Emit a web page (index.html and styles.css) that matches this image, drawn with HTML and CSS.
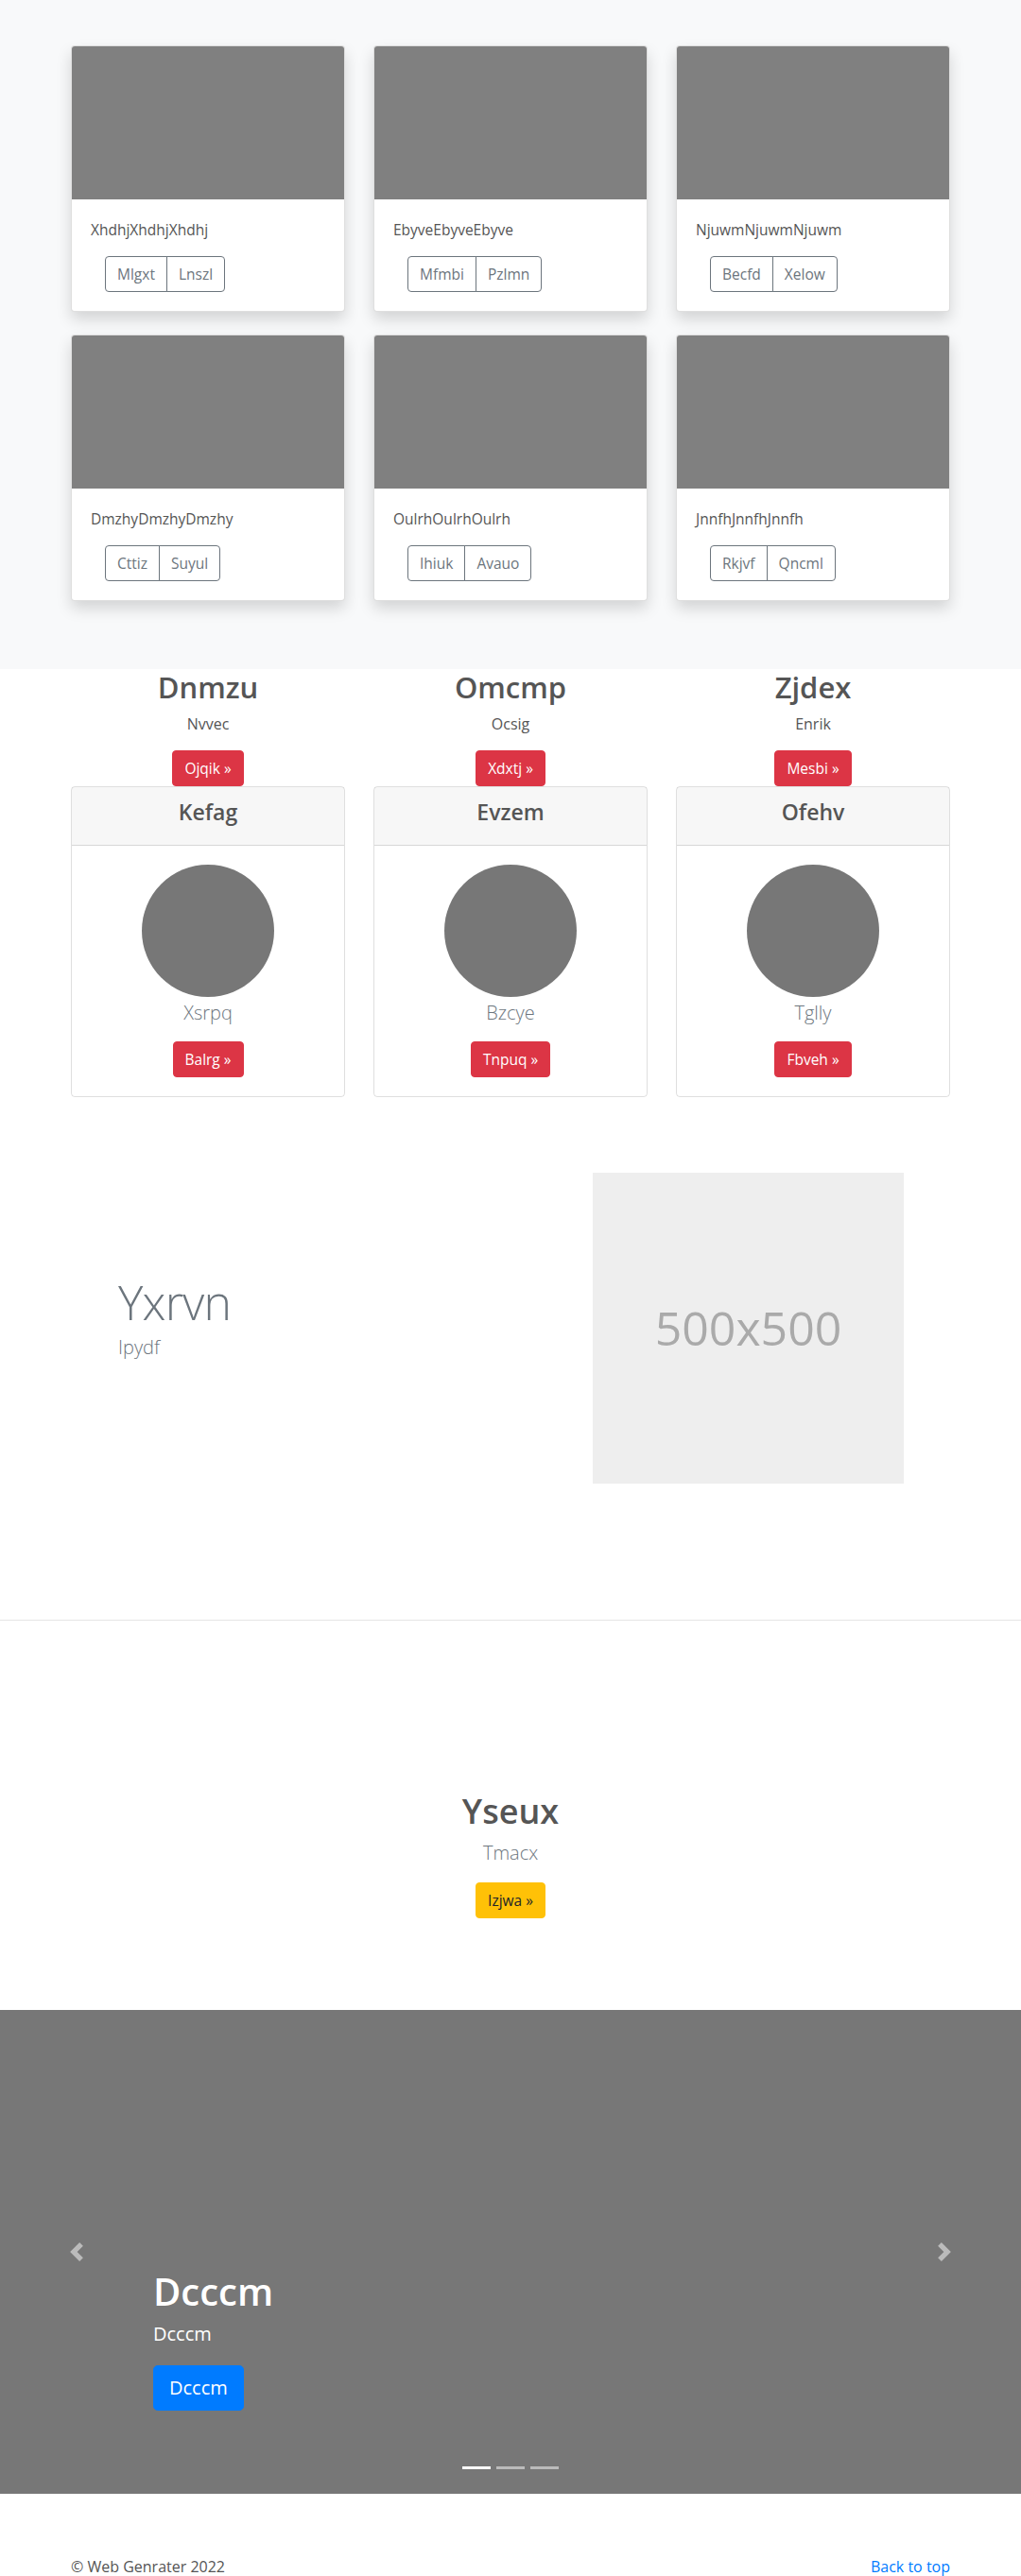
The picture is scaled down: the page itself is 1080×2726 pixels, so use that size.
FILE: index.html
```html
<!DOCTYPE html>
<html lang="en">
<head>
<meta charset="utf-8">
<title>Album</title>
<link rel="stylesheet" href="styles.css">
</head>
<body>
<main>
  <section class="album">
    <div class="container album-grid">
      <div class="card">
        <div class="card-img"></div>
        <div class="card-body">
          <p class="card-text">XhdhjXhdhjXhdhj</p>
          <div class="btn-group"><button type="button" class="btn-outline">Mlgxt</button><button type="button" class="btn-outline">Lnszl</button></div>
        </div>
      </div>
      <div class="card">
        <div class="card-img"></div>
        <div class="card-body">
          <p class="card-text">EbyveEbyveEbyve</p>
          <div class="btn-group"><button type="button" class="btn-outline">Mfmbi</button><button type="button" class="btn-outline">Pzlmn</button></div>
        </div>
      </div>
      <div class="card">
        <div class="card-img"></div>
        <div class="card-body">
          <p class="card-text">NjuwmNjuwmNjuwm</p>
          <div class="btn-group"><button type="button" class="btn-outline">Becfd</button><button type="button" class="btn-outline">Xelow</button></div>
        </div>
      </div>
      <div class="card">
        <div class="card-img"></div>
        <div class="card-body">
          <p class="card-text">DmzhyDmzhyDmzhy</p>
          <div class="btn-group"><button type="button" class="btn-outline">Cttiz</button><button type="button" class="btn-outline">Suyul</button></div>
        </div>
      </div>
      <div class="card">
        <div class="card-img"></div>
        <div class="card-body">
          <p class="card-text">OulrhOulrhOulrh</p>
          <div class="btn-group"><button type="button" class="btn-outline">Ihiuk</button><button type="button" class="btn-outline">Avauo</button></div>
        </div>
      </div>
      <div class="card">
        <div class="card-img"></div>
        <div class="card-body">
          <p class="card-text">JnnfhJnnfhJnnfh</p>
          <div class="btn-group"><button type="button" class="btn-outline">Rkjvf</button><button type="button" class="btn-outline">Qncml</button></div>
        </div>
      </div>
    </div>
  </section>

  <section class="features">
    <div class="container features-grid">
      <div class="feature">
        <h2 class="feature-title">Dnmzu</h2>
        <p class="feature-text">Nvvec</p>
        <a class="btn btn-danger" href="#">Ojqik »</a>
        <div class="price-card">
          <div class="price-head"><h4 class="price-title">Kefag</h4></div>
          <div class="price-body">
            <div class="circle"></div>
            <p class="price-lead">Xsrpq</p>
            <a class="btn btn-danger" href="#">Balrg »</a>
          </div>
        </div>
      </div>
      <div class="feature">
        <h2 class="feature-title">Omcmp</h2>
        <p class="feature-text">Ocsig</p>
        <a class="btn btn-danger" href="#">Xdxtj »</a>
        <div class="price-card">
          <div class="price-head"><h4 class="price-title">Evzem</h4></div>
          <div class="price-body">
            <div class="circle"></div>
            <p class="price-lead">Bzcye</p>
            <a class="btn btn-danger" href="#">Tnpuq »</a>
          </div>
        </div>
      </div>
      <div class="feature">
        <h2 class="feature-title">Zjdex</h2>
        <p class="feature-text">Enrik</p>
        <a class="btn btn-danger" href="#">Mesbi »</a>
        <div class="price-card">
          <div class="price-head"><h4 class="price-title">Ofehv</h4></div>
          <div class="price-body">
            <div class="circle"></div>
            <p class="price-lead">Tglly</p>
            <a class="btn btn-danger" href="#">Fbveh »</a>
          </div>
        </div>
      </div>
    </div>
  </section>

  <section class="featurette">
    <div class="container featurette-row">
      <div class="featurette-text">
        <h2 class="featurette-heading">Yxrvn</h2>
        <p class="lead">Ipydf</p>
      </div>
      <div class="placeholder">500x500</div>
    </div>
  </section>

  <hr class="divider">

  <section class="hero">
    <h1 class="hero-title">Yseux</h1>
    <p class="lead">Tmacx</p>
    <a class="btn btn-warning" href="#">Izjwa »</a>
  </section>

  <section class="carousel">
    <a class="carousel-control prev" href="#" aria-label="Previous">
      <svg width="20" height="20" viewBox="0 0 8 8"><path fill="#fff" d="M5.25 0l-4 4 4 4 1.5-1.5L4.25 4l2.5-2.5L5.25 0z"/></svg>
    </a>
    <a class="carousel-control next" href="#" aria-label="Next">
      <svg width="20" height="20" viewBox="0 0 8 8"><path fill="#fff" d="M2.75 0l-1.5 1.5L3.75 4l-2.5 2.5L2.75 8l4-4-4-4z"/></svg>
    </a>
    <div class="carousel-caption">
      <h1 class="caption-title">Dcccm</h1>
      <p class="caption-text">Dcccm</p>
      <a class="btn-lg-primary" href="#">Dcccm</a>
    </div>
    <div class="indicators">
      <span class="indicator active"></span>
      <span class="indicator"></span>
      <span class="indicator"></span>
    </div>
  </section>
</main>

<footer class="footer">
  <div class="container footer-row">
    <p class="copy">© Web Genrater 2022</p>
    <a class="back-top" href="#">Back to top</a>
  </div>
</footer>
</body>
</html>
```

FILE: styles.css
```css
* { box-sizing: border-box; }

body {
  margin: 0;
  font-family: "Open Sans", "Noto Sans", sans-serif;
  font-size: 16px;
  line-height: 1.5;
  color: #555;
  background: #fff;
}

.container {
  width: 930px;
  margin: 0 auto;
}

/* Album */
.album {
  background: #f8f9fa;
  padding: 48px 0 72px;
}

.album-grid {
  display: grid;
  grid-template-columns: repeat(3, 1fr);
  column-gap: 30px;
  row-gap: 24px;
}

.card {
  background: #fff;
  border: 1px solid rgba(0, 0, 0, .125);
  border-radius: 4px;
  box-shadow: 0 8px 16px rgba(0, 0, 0, .15);
}

.card-img {
  height: 162px;
  background: #808080;
  border-radius: 3px 3px 0 0;
}

.card-body {
  padding: 20px;
}

.card-text {
  margin: 0 0 16px;
  font-size: 15.5px;
  line-height: 24px;
}

.btn-group {
  display: inline-flex;
  margin-left: 15px;
}

.btn-outline {
  font-family: inherit;
  font-size: 15.5px;
  line-height: 24px;
  padding: 6px 12px;
  color: #6c757d;
  background: transparent;
  border: 1px solid #6c757d;
  border-radius: 4px;
}

.btn-outline:first-child {
  border-top-right-radius: 0;
  border-bottom-right-radius: 0;
}

.btn-outline + .btn-outline {
  margin-left: -1px;
  border-top-left-radius: 0;
  border-bottom-left-radius: 0;
}

/* Buttons */
.btn {
  display: inline-block;
  padding: 6px 12px;
  font-size: 15.5px;
  line-height: 24px;
  border: 1px solid transparent;
  border-radius: 4px;
  text-decoration: none;
}

.btn-danger {
  background: #dc3545;
  border-color: #dc3545;
  color: #fff;
}

.btn-warning {
  background: #ffc107;
  border-color: #ffc107;
  color: #212529;
}

/* Features */
.features-grid {
  display: grid;
  grid-template-columns: repeat(3, 1fr);
  column-gap: 30px;
}

.feature {
  display: flex;
  flex-direction: column;
  align-items: center;
  text-align: center;
}

.feature-title {
  margin: 0 0 8px;
  font-size: 31px;
  line-height: 38px;
  font-weight: 600;
}

.feature-text {
  margin: 0 0 16px;
}

.price-card {
  align-self: stretch;
  border: 1px solid rgba(0, 0, 0, .125);
  border-radius: 4px;
  text-align: center;
}

.price-head {
  background: rgba(0, 0, 0, .03);
  border-bottom: 1px solid rgba(0, 0, 0, .125);
  padding: 12px 20px;
}

.price-title {
  margin: 0 0 8px;
  font-size: 23px;
  line-height: 28.8px;
  font-weight: 600;
}

.price-body {
  padding: 20px;
}

.circle {
  width: 140px;
  height: 140px;
  border-radius: 50%;
  background: #777;
  margin: 0 auto;
}

.price-lead {
  margin: 2px 0 15px;
  font-size: 20px;
  line-height: 30px;
  font-weight: 300;
  color: #6c757d;
}

/* Featurette */
.featurette {
  padding: 80px 0 144px;
}

.featurette-row {
  display: flex;
  align-items: center;
}

.featurette-text {
  flex: 1;
  padding-left: 50px;
}

.featurette-heading {
  margin: 0 0 8px;
  font-size: 50px;
  line-height: 1;
  font-weight: 300;
  letter-spacing: -0.8px;
  color: #6c757d;
}

.lead {
  margin: 0 0 16px;
  font-size: 20px;
  line-height: 30px;
  font-weight: 300;
  color: #6c757d;
}

.placeholder {
  width: 329px;
  height: 329px;
  margin-right: 49px;
  background: #eee;
  color: #aaa;
  font-size: 50px;
  display: flex;
  align-items: center;
  justify-content: center;
}

.divider {
  margin: 0;
  border: 0;
  border-top: 1px solid rgba(0, 0, 0, .1);
}

/* Hero */
.hero {
  text-align: center;
  padding: 180px 0 97px;
}

.hero-title {
  margin: 0 0 8px;
  font-size: 36px;
  line-height: 43.2px;
  font-weight: 600;
}

/* Carousel */
.carousel {
  position: relative;
  height: 512px;
  background: #777;
  overflow: hidden;
}

.carousel-control {
  position: absolute;
  top: 0;
  bottom: 0;
  width: 15%;
  display: flex;
  align-items: center;
  justify-content: center;
  opacity: .5;
}

.carousel-control.prev { left: 0; }
.carousel-control.next { right: 0; }

.carousel-caption {
  position: absolute;
  left: 15%;
  right: 15%;
  top: 274px;
  color: #fff;
}

.caption-title {
  margin: 0 0 6px;
  font-size: 40px;
  line-height: 48px;
  font-weight: 600;
}

.caption-text {
  margin: 0 0 18px;
  font-size: 20px;
  line-height: 30px;
}

.btn-lg-primary {
  display: inline-block;
  padding: 8px 16px;
  font-size: 20px;
  line-height: 30px;
  border: 1px solid #007bff;
  border-radius: 4.8px;
  background: #007bff;
  color: #fff;
  text-decoration: none;
}

.indicators {
  position: absolute;
  left: 0;
  right: 0;
  bottom: 26px;
  display: flex;
  justify-content: center;
}

.indicator {
  width: 30px;
  height: 3px;
  margin: 0 3px;
  background: #fff;
  opacity: .5;
}

.indicator.active {
  opacity: 1;
}

/* Footer */
.footer {
  padding: 65px 0 48px;
}

.footer-row {
  display: flex;
  justify-content: space-between;
}

.copy {
  margin: 0;
}

.back-top {
  color: #007bff;
  text-decoration: none;
}
```
